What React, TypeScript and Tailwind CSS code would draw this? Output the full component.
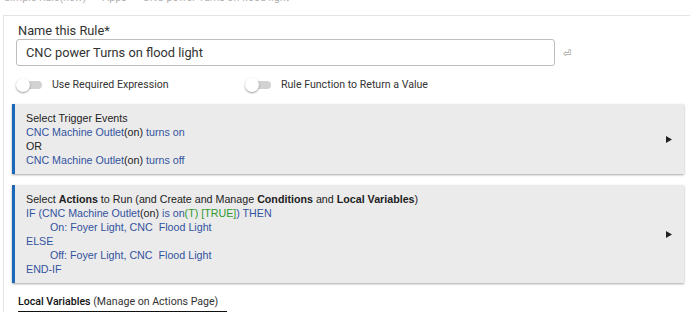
import React from 'react';

const blue = 'text-[#33539e]';

function Toggle({ label }: { label: string }) {
  return (
    <div className="flex items-center h-[14px]">
      <div className="relative w-[26px] h-[14px] flex items-center">
        <div className="ml-[2px] w-[24px] h-[8px] rounded-full bg-[#d2d2d2]" />
        <div className="absolute left-0 top-0 w-[14px] h-[14px] rounded-full bg-white shadow-[0_1px_2px_rgba(0,0,0,0.4)]" />
      </div>
      <span className="ml-[10px] text-[10.6px] leading-[14px] text-[#333]">{label}</span>
    </div>
  );
}

function Arrow() {
  return (
    <svg width="6" height="7" viewBox="0 0 6 7" className="shrink-0">
      <polygon points="0,0 6,3.5 0,7" fill="#222" />
    </svg>
  );
}

function Box({ children }: { children: React.ReactNode }) {
  return (
    <div className="flex items-center bg-[#ebebeb] border-l-[3px] border-[#1e68b8] shadow-[0_1px_2px_rgba(0,0,0,0.35)] pl-[11px] pr-[12px] py-[7px]">
      <div className="flex-1 text-[10.7px] leading-[14px] text-[#222] whitespace-pre" style={{ fontFamily: '"Liberation Sans", Arial, sans-serif' }}>
        {children}
      </div>
      <Arrow />
    </div>
  );
}

export default function App() {
  return (
    <div className="w-[690px] h-[312px] overflow-hidden bg-white" style={{ fontFamily: 'Roboto, "Liberation Sans", sans-serif' }}>
      <div className="h-[15px] overflow-hidden">
        <div className="mt-[-8px] pl-[4px] text-[10.6px] leading-[12px] text-[#b0b0b0] whitespace-pre">
          Simple Rule(new)  &gt;  Apps  &gt;  CNC power Turns on flood light
        </div>
      </div>
      <div className="ml-[3px] border-t border-l border-[#e3e3e3] pl-[8px] pr-[6px] pt-[7px]">
        <div className="ml-[6px] text-[12.8px] leading-[16px] text-[#333]">Name this Rule*</div>
        <div className="flex items-center">
          <div className="ml-[4px] w-[539px] h-[27px] border border-[#bdbdbd] rounded-[3px] flex items-center pl-[9px] text-[12.8px] text-[#333]">
            CNC power Turns on flood light
          </div>
          <span className="ml-[8px] mt-[2px] text-[10px] text-[#888]" style={{ fontFamily: '"DejaVu Sans", sans-serif' }}>⏎</span>
        </div>
        <div className="flex mt-[12px] ml-[4px]">
          <div className="w-[229px]">
            <Toggle label="Use Required Expression" />
          </div>
          <Toggle label="Rule Function to Return a Value" />
        </div>
        <div className="mt-[12px]">
          <Box>
            <div>Select Trigger Events</div>
            <div className={blue}>CNC Machine Outlet<span className="text-[#222]">(on)</span> turns on</div>
            <div>OR</div>
            <div className={blue}>CNC Machine Outlet<span className="text-[#222]">(on)</span> turns off</div>
          </Box>
        </div>
        <div className="mt-[11px]">
          <Box>
            <div>
              Select <b>Actions</b> to Run (and Create and Manage <b>Conditions</b> and <b>Local Variables</b>)
            </div>
            <div className={blue}>
              IF (CNC Machine Outlet<span className="text-[#222]">(on)</span> is on<span className="text-[#2f9a2f]">(T) [TRUE]</span>) THEN
            </div>
            <div className={`${blue} pl-[24px]`}>On: Foyer Light, CNC  Flood Light</div>
            <div className={blue}>ELSE</div>
            <div className={`${blue} pl-[24px]`}>Off: Foyer Light, CNC  Flood Light</div>
            <div className={blue}>END-IF</div>
          </Box>
        </div>
        <div className="mt-[12px] ml-[6px] text-[10.6px] leading-[14px] text-[#333]">
          <span className="font-medium text-[#111]">Local Variables</span> (Manage on Actions Page)
        </div>
        <div className="ml-[6px] mt-[2px] w-[209px] h-[10px] border-t-2 border-l-2 border-r-2 border-[#111] flex">
          <div className="w-[124px] border-r border-[#111]" />
        </div>
      </div>
    </div>
  );
}
